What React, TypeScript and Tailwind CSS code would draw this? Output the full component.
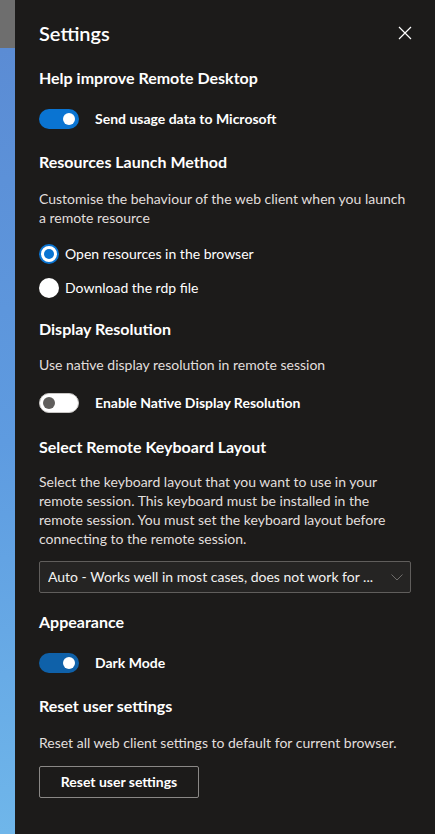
import { useState } from 'react'

const FONT = "font-['Segoe_UI','Lato','Liberation_Sans',sans-serif]"

function Toggle({ on, tone = 'bright' }: { on: boolean; tone?: 'bright' | 'deep' }) {
  if (!on) {
    return (
      <div className="w-10 h-5 rounded-full bg-white border border-[#c8c6c4] flex items-center px-[3px] shrink-0">
        <div className="w-3 h-3 rounded-full bg-[#605e5c]" />
      </div>
    )
  }
  return (
    <div
      className={[
        'w-10 h-5 rounded-full flex items-center justify-end px-[4px] shrink-0',
        tone === 'bright' ? 'bg-[#0a74d2]' : 'bg-[#0f61a9]',
      ].join(' ')}
    >
      <div className="w-3 h-3 rounded-full bg-white" />
    </div>
  )
}

function Radio({ checked }: { checked: boolean }) {
  return checked ? (
    <div className="w-5 h-5 rounded-full bg-white border-2 border-[#0a74d2] flex items-center justify-center shrink-0">
      <div className="w-[10px] h-[10px] rounded-full bg-[#0a74d2]" />
    </div>
  ) : (
    <div className="w-5 h-5 rounded-full bg-white shrink-0" />
  )
}

function Heading({ children, className = '' }: { children: string; className?: string }) {
  return <h2 className={`text-white text-base font-bold leading-[22px] ${className}`}>{children}</h2>
}

function Desc({ children, className = '' }: { children: string; className?: string }) {
  return <p className={`text-[#e1dfdd] text-sm leading-[19px] ${className}`}>{children}</p>
}

export default function App() {
  const [launch] = useState<'browser' | 'rdp'>('browser')

  return (
    <div className={`flex w-[435px] h-[834px] overflow-hidden ${FONT}`}>
      <div className="w-[15px] shrink-0 flex flex-col">
        <div className="h-[48px] bg-[#6e6e6e]" />
        <div className="flex-1 bg-gradient-to-b from-[#5b8cd4] via-[#5e9be0] to-[#6fb6ea]" />
      </div>

      <div className="flex-1 bg-[#1c1b1a] px-6 pt-[19px]">
        <div className="flex items-center justify-between">
          <h1 className="text-white text-xl font-semibold leading-7">Settings</h1>
          <button className="mr-[-1px] text-white">
            <svg width="14" height="14" viewBox="0 0 14 14" fill="none" stroke="currentColor" strokeWidth="1.2">
              <path d="M1 1L13 13M13 1L1 13" />
            </svg>
          </button>
        </div>

        <Heading className="mt-5">Help improve Remote Desktop</Heading>
        <div className="mt-5 flex items-center gap-4">
          <Toggle on />
          <span className="text-white text-sm font-bold">Send usage data to Microsoft</span>
        </div>

        <Heading className="mt-[22px]">Resources Launch Method</Heading>
        <Desc className="mt-[16px]">Customise the behaviour of the web client when you launch a remote resource</Desc>
        <div className="mt-[17px] flex flex-col gap-[14px]">
          <label className="flex items-center gap-[6px] h-5">
            <Radio checked={launch === 'browser'} />
            <span className="text-white text-sm">Open resources in the browser</span>
          </label>
          <label className="flex items-center gap-[6px] h-5">
            <Radio checked={launch === 'rdp'} />
            <span className="text-white text-sm">Download the rdp file</span>
          </label>
        </div>

        <Heading className="mt-5">Display Resolution</Heading>
        <Desc className="mt-[15px]">Use native display resolution in remote session</Desc>
        <div className="mt-[19px] flex items-center gap-4">
          <Toggle on={false} />
          <span className="text-white text-sm font-bold">Enable Native Display Resolution</span>
        </div>

        <Heading className="mt-[23px]">Select Remote Keyboard Layout</Heading>
        <Desc className="mt-[14px]">
          Select the keyboard layout that you want to use in your remote session. This keyboard must be installed in the remote session. You must set the keyboard layout before connecting to the remote session.
        </Desc>
        <div className="mt-[13px] h-8 border border-[#605e5c] rounded-[2px] bg-[#252423] flex items-center justify-between pl-2 pr-[7px]">
          <span className="text-[#f3f2f1] text-sm truncate">Auto - Works well in most cases, does not work for ...</span>
          <svg width="12" height="7" viewBox="0 0 12 7" fill="none" stroke="#6e6c6a" strokeWidth="1" className="shrink-0 ml-2">
            <path d="M0.5 0.5L6 6L11.5 0.5" />
          </svg>
        </div>

        <Heading className="mt-[18px]">Appearance</Heading>
        <div className="mt-5 flex items-center gap-4">
          <Toggle on tone="deep" />
          <span className="text-white text-sm font-bold">Dark Mode</span>
        </div>

        <Heading className="mt-[22px]">Reset user settings</Heading>
        <Desc className="mt-[16px]">Reset all web client settings to default for current browser.</Desc>
        <button className="mt-[14px] w-40 h-8 border border-[#8a8886] rounded-[2px] text-white text-sm font-bold">
          Reset user settings
        </button>
      </div>
    </div>
  )
}
